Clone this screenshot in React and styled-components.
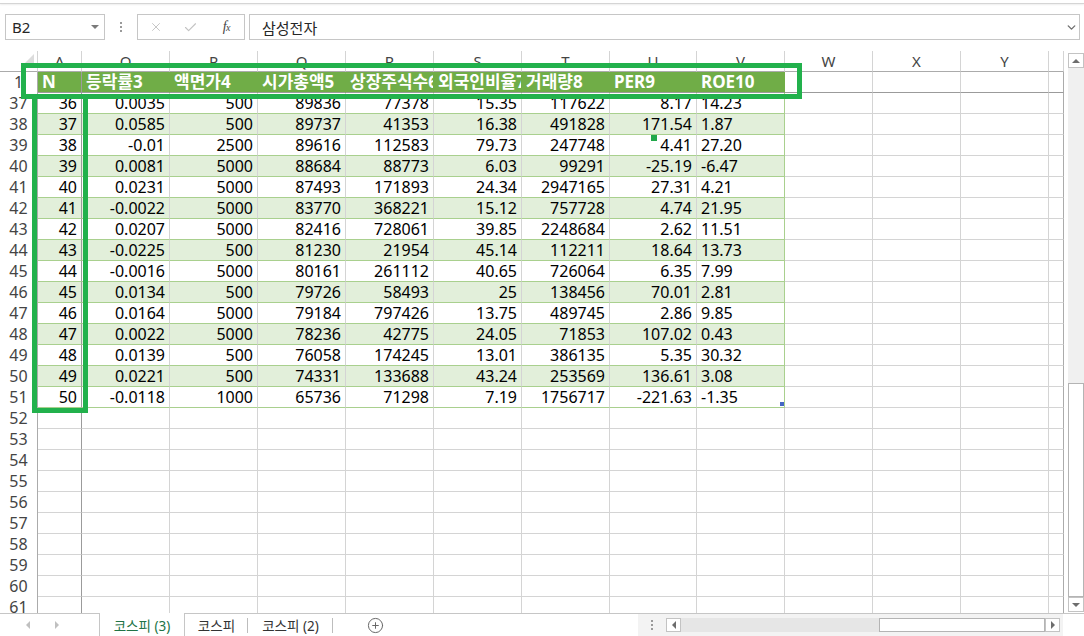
import styled, { createGlobalStyle } from "styled-components";
import { X, Check, ChevronDown, CirclePlus } from "lucide-react";

const FONT = `"Noto Sans", "Noto Sans CJK KR", sans-serif`;

const GlobalStyle = createGlobalStyle`
  body {
    margin: 0;
    overflow: hidden;
    background: #fff;
    font-family: ${FONT};
  }
`;

const Window = styled.div`
  position: relative;
  width: 1084px;
  height: 636px;
  display: flex;
  flex-direction: column;
  overflow: hidden;
  background: #fff;
`;

const TopLine = styled.div`
  height: 3px;
  flex: none;
  border-bottom: 1px solid #d5d5d5;
  box-shadow: 0 1px 2px rgba(0, 0, 0, 0.07);
`;

const FormulaBar = styled.div`
  height: 47px;
  flex: none;
  box-sizing: border-box;
  padding: 10px 4px 0 5px;
  display: flex;
  align-items: flex-start;
`;

const Field = styled.div`
  box-sizing: border-box;
  height: 26px;
  border: 1px solid #c6c6c6;
  background: #fff;
  display: flex;
  align-items: center;
  width: ${(p) => p.$w}px;
  flex: ${(p) => (p.$grow ? 1 : "none")};
  padding-left: ${(p) => p.$pad || 0}px;
  margin-left: ${(p) => p.$gap || 0}px;
  font-size: 15px;
  color: #262626;
`;

const FieldText = styled.span`
  flex: 1;
  white-space: nowrap;
`;

const Caret = styled.span`
  width: 0;
  height: 0;
  border-left: 4px solid transparent;
  border-right: 4px solid transparent;
  border-top: 4px solid #7a7a7a;
  margin-right: 5px;
`;

const Dots = styled.div`
  width: ${(p) => p.$w || 32}px;
  flex: none;
  height: 26px;
  display: flex;
  flex-direction: column;
  align-items: center;
  justify-content: center;
  gap: 2px;
`;

const Dot = styled.span`
  width: 2px;
  height: 2px;
  background: #9a9a9a;
`;

const FxSlot = styled.span`
  width: ${(p) => p.$w || 36}px;
  display: flex;
  justify-content: center;
  align-items: center;
  color: ${(p) => p.$color || "#c3c3c3"};
`;

const Fx = styled.span`
  font-family: "Liberation Serif", serif;
  font-style: italic;
  font-size: 14px;
  color: #444;
  letter-spacing: -0.5px;
  & small {
    font-size: 10px;
  }
`;

const Main = styled.div`
  flex: none;
  height: 562px;
  display: flex;
`;

const Sheet = styled.div`
  width: 1064px;
  flex: none;
  overflow: hidden;
  display: flex;
  flex-direction: column;
`;

const Row = styled.div`
  display: flex;
  height: 21px;
  flex: none;
`;

const Corner = styled.div`
  width: 38px;
  flex: none;
  box-sizing: border-box;
  border-right: 1px solid #d4d4d4;
  border-bottom: 1px solid #ababab;
  display: flex;
  align-items: flex-end;
  justify-content: flex-end;
  padding: 0 3px 7px 0;
`;

const CornerMark = styled.span`
  width: 0;
  height: 0;
  border-left: 10px solid transparent;
  border-bottom: 10px solid #dcdcdc;
`;

const ColHead = styled.div`
  width: ${(p) => p.$w}px;
  flex: none;
  box-sizing: border-box;
  border-right: 1px solid #d4d4d4;
  border-bottom: 1px solid #ababab;
  text-align: center;
  font-size: 15px;
  line-height: 20px;
  color: #444;
  overflow-x: clip;
`;

const RowHead = styled.div`
  width: 38px;
  flex: none;
  box-sizing: border-box;
  border-right: 1px solid #ababab;
  text-align: center;
  font-size: 16px;
  line-height: 20px;
  color: #444;
`;

const Cell = styled.div`
  position: relative;
  flex: none;
  box-sizing: border-box;
  width: ${(p) => p.$w}px;
  height: 21px;
  padding: 0 4px;
  border-right: 1px solid ${(p) => p.$vline};
  border-bottom: 1px solid ${(p) => p.$hline};
  background: ${(p) => p.$fill};
  color: ${(p) => (p.$head ? "#fff" : "#000")};
  font-weight: ${(p) => (p.$head ? 700 : 400)};
  font-size: ${(p) => (p.$head ? 17 : 16)}px;
  text-align: ${(p) => p.$align};
  line-height: 20px;
  white-space: nowrap;
  overflow-x: clip;
  overflow-y: visible;
`;

const ErrorMark = styled.span`
  position: absolute;
  left: 41px;
  top: 0;
  width: 6px;
  height: 6px;
  background: #21a84a;
`;

const SizeGrip = styled.span`
  position: absolute;
  right: 0;
  bottom: 1px;
  width: 4px;
  height: 4px;
  background: #4466c4;
`;

const VScroll = styled.div`
  width: 16px;
  height: 559px;
  margin: 2px 0 0 4px;
  flex: none;
  display: flex;
  flex-direction: column;
`;

const ScrollBtn = styled.div`
  box-sizing: border-box;
  width: ${(p) => p.$w || 15}px;
  height: ${(p) => p.$h || 15}px;
  flex: none;
  border: 1px solid #c3c3c3;
  background: #fff;
  display: flex;
  align-items: center;
  justify-content: center;
`;

const Tri = styled.span`
  width: 0;
  height: 0;
  border: 4px solid transparent;
  ${(p) => p.$dir === "up" && "border-bottom: 4px solid #6d6d6d; border-top-width: 0;"}
  ${(p) => p.$dir === "down" && "border-top: 4px solid #6d6d6d; border-bottom-width: 0;"}
  ${(p) => p.$dir === "left" && `border-right: 4px solid ${p.$c || "#6d6d6d"}; border-left-width: 0;`}
  ${(p) => p.$dir === "right" && `border-left: 4px solid ${p.$c || "#6d6d6d"}; border-right-width: 0;`}
`;

const VTrack = styled.div`
  flex: 1;
  background: #f0f0f0;
  display: flex;
  flex-direction: column;
  justify-content: flex-end;
`;

const VThumb = styled.div`
  height: 214px;
  box-sizing: border-box;
  border: 1px solid #b4b4b4;
  background: #fff;
`;

const TabBar = styled.div`
  flex: none;
  height: 23px;
  box-sizing: border-box;
  border-top: 1px solid #c6c6c6;
  display: flex;
  align-items: stretch;
  font-size: 13.5px;
  color: #333;
`;

const NavArea = styled.div`
  width: 99px;
  flex: none;
  display: flex;
  align-items: center;
  padding-left: 26px;
  gap: 25px;
  box-sizing: border-box;
`;

const Tab = styled.div`
  width: ${(p) => p.$w}px;
  flex: none;
  box-sizing: border-box;
  display: flex;
  align-items: center;
  justify-content: center;
  white-space: nowrap;
  ${(p) =>
    p.$active
      ? `
    margin-top: -1px;
    background: #fff;
    border-left: 1px solid #c6c6c6;
    border-right: 1px solid #c6c6c6;
    color: #217346;
  `
      : `
    color: #333;
    background: linear-gradient(#bdbdbd, #bdbdbd) right center / 1px 15px no-repeat;
  `}
`;

const AddSheet = styled.div`
  margin-left: 34px;
  display: flex;
  align-items: center;
  color: #666;
`;

const HScrollArea = styled.div`
  margin-left: auto;
  width: 425px;
  flex: none;
  background: #f3f3f3;
  display: flex;
  align-items: center;
  padding-left: 12px;
  box-sizing: border-box;
`;

const HBar = styled.div`
  margin-left: 12px;
  display: flex;
  height: 14px;
  width: 394px;
`;

const HTrack = styled.div`
  width: 198px;
  flex: none;
  background: #e6e6e6;
`;

const HThumb = styled.div`
  width: 166px;
  flex: none;
  box-sizing: border-box;
  border: 1px solid #b4b4b4;
  background: #fff;
`;

const BottomCorner = styled.div`
  width: 21px;
  flex: none;
  background: #fff;
`;

const Mark = styled.div`
  position: absolute;
  left: ${(p) => p.$x}px;
  top: ${(p) => p.$y}px;
  width: ${(p) => p.$w}px;
  height: ${(p) => p.$h}px;
  box-sizing: border-box;
  border: 5px solid #22b14c;
  pointer-events: none;
`;

const cols = [
  { name: "A", w: 44 },
  { name: "O", w: 88 },
  { name: "P", w: 88 },
  { name: "Q", w: 88 },
  { name: "R", w: 88 },
  { name: "S", w: 88 },
  { name: "T", w: 88 },
  { name: "U", w: 87 },
  { name: "V", w: 88 },
  { name: "W", w: 88 },
  { name: "X", w: 88 },
  { name: "Y", w: 88 },
  { name: "", w: 15 },
];

const headers = ["N", "등락률3", "액면가4", "시가총액5", "상장주식수6", "외국인비율7", "거래량8", "PER9", "ROE10"];

const data = [
  ["36", "0.0035", "500", "89836", "77378", "15.35", "117622", "8.17", "14.23"],
  ["37", "0.0585", "500", "89737", "41353", "16.38", "491828", "171.54", "1.87"],
  ["38", "-0.01", "2500", "89616", "112583", "79.73", "247748", "4.41", "27.20"],
  ["39", "0.0081", "5000", "88684", "88773", "6.03", "99291", "-25.19", "-6.47"],
  ["40", "0.0231", "5000", "87493", "171893", "24.34", "2947165", "27.31", "4.21"],
  ["41", "-0.0022", "5000", "83770", "368221", "15.12", "757728", "4.74", "21.95"],
  ["42", "0.0207", "5000", "82416", "728061", "39.85", "2248684", "2.62", "11.51"],
  ["43", "-0.0225", "500", "81230", "21954", "45.14", "112211", "18.64", "13.73"],
  ["44", "-0.0016", "5000", "80161", "261112", "40.65", "726064", "6.35", "7.99"],
  ["45", "0.0134", "500", "79726", "58493", "25", "138456", "70.01", "2.81"],
  ["46", "0.0164", "5000", "79184", "797426", "13.75", "489745", "2.86", "9.85"],
  ["47", "0.0022", "5000", "78236", "42775", "24.05", "71853", "107.02", "0.43"],
  ["48", "0.0139", "500", "76058", "174245", "13.01", "386135", "5.35", "30.32"],
  ["49", "0.0221", "500", "74331", "133688", "43.24", "253569", "136.61", "3.08"],
  ["50", "-0.0118", "1000", "65736", "71298", "7.19", "1756717", "-221.63", "-1.35"],
];

const TABLE_END = 8;
const FREEZE = "#9b9b9b";
const GRID = "#d4d4d4";
const BAND = "#a9d08e";

// border / fill look of one cell, by row kind and column
const look = (kind, i, j) => {
  const inTable = j <= TABLE_END;
  let vline = j === 0 ? FREEZE : j === cols.length - 1 ? "#ababab" : GRID;
  if (kind === "head") {
    if (inTable && j !== 0) vline = "#70ad47";
    return {
      $vline: vline,
      $hline: FREEZE,
      $fill: inTable ? "#70ad47" : "#fff",
      $head: inTable,
      $align: "left",
    };
  }
  if (kind === "data" && inTable) {
    if (j === TABLE_END) vline = BAND;
    return {
      $vline: vline,
      $hline: BAND,
      $fill: i % 2 === 1 ? "#e2efda" : "#fff",
      $align: j === TABLE_END ? "left" : "right",
    };
  }
  return { $vline: vline, $hline: GRID, $fill: "#fff", $align: "right" };
};

const App = () => {
  const emptyRows = [52, 53, 54, 55, 56, 57, 58, 59, 60, 61];
  return (
    <Window>
      <GlobalStyle />
      <TopLine />
      <FormulaBar>
        <Field $w={100} $pad={6}>
          <FieldText>B2</FieldText>
          <Caret />
        </Field>
        <Dots>
          <Dot />
          <Dot />
          <Dot />
        </Dots>
        <Field $w={108}>
          <FxSlot>
            <X size={14} strokeWidth={1.6} />
          </FxSlot>
          <FxSlot>
            <Check size={15} strokeWidth={1.8} />
          </FxSlot>
          <FxSlot>
            <Fx>
              f<small>x</small>
            </Fx>
          </FxSlot>
        </Field>
        <Field $grow $pad={12} $gap={4}>
          <FieldText>삼성전자</FieldText>
          <FxSlot $color="#707070" $w={16}>
            <ChevronDown size={13} strokeWidth={2.6} />
          </FxSlot>
        </Field>
      </FormulaBar>

      <Main>
        <Sheet>
          <Row>
            <Corner>
              <CornerMark />
            </Corner>
            {cols.map((c, j) => (
              <ColHead key={j} $w={c.w}>
                {c.name}
              </ColHead>
            ))}
          </Row>
          <Row>
            <RowHead>1</RowHead>
            {cols.map((c, j) => (
              <Cell key={j} $w={c.w} {...look("head", 0, j)}>
                {headers[j] || ""}
              </Cell>
            ))}
          </Row>
          {data.map((vals, i) => (
            <Row key={i}>
              <RowHead>{37 + i}</RowHead>
              {cols.map((c, j) => (
                <Cell key={j} $w={c.w} {...look("data", i, j)}>
                  {vals[j] || ""}
                  {i === 2 && j === 7 && <ErrorMark />}
                  {i === data.length - 1 && j === TABLE_END && <SizeGrip />}
                </Cell>
              ))}
            </Row>
          ))}
          {emptyRows.map((n) => (
            <Row key={n}>
              <RowHead>{n}</RowHead>
              {cols.map((c, j) => (
                <Cell key={j} $w={c.w} {...look("empty", 0, j)} />
              ))}
            </Row>
          ))}
        </Sheet>
        <VScroll>
          <ScrollBtn $w={16}>
            <Tri $dir="up" />
          </ScrollBtn>
          <VTrack>
            <VThumb />
          </VTrack>
          <ScrollBtn $w={16}>
            <Tri $dir="down" />
          </ScrollBtn>
        </VScroll>
      </Main>

      <TabBar>
        <NavArea>
          <Tri $dir="left" $c="#c0c0c0" />
          <Tri $dir="right" $c="#c0c0c0" />
        </NavArea>
        <Tab $w={86} $active>
          코스피 (3)
        </Tab>
        <Tab $w={63}>코스피</Tab>
        <Tab $w={85}>코스피 (2)</Tab>
        <AddSheet>
          <CirclePlus size={17} strokeWidth={1.4} />
        </AddSheet>
        <HScrollArea>
          <Dots $w={4}>
            <Dot />
            <Dot />
            <Dot />
          </Dots>
          <HBar>
            <ScrollBtn $h={14}>
              <Tri $dir="left" />
            </ScrollBtn>
            <HTrack />
            <HThumb />
            <ScrollBtn $h={14}>
              <Tri $dir="right" />
            </ScrollBtn>
          </HBar>
        </HScrollArea>
        <BottomCorner />
      </TabBar>

      <Mark $x={21} $y={63} $w={781} $h={36} />
      <Mark $x={32} $y={94} $w={56} $h={319} />
    </Window>
  );
};

export default App;
